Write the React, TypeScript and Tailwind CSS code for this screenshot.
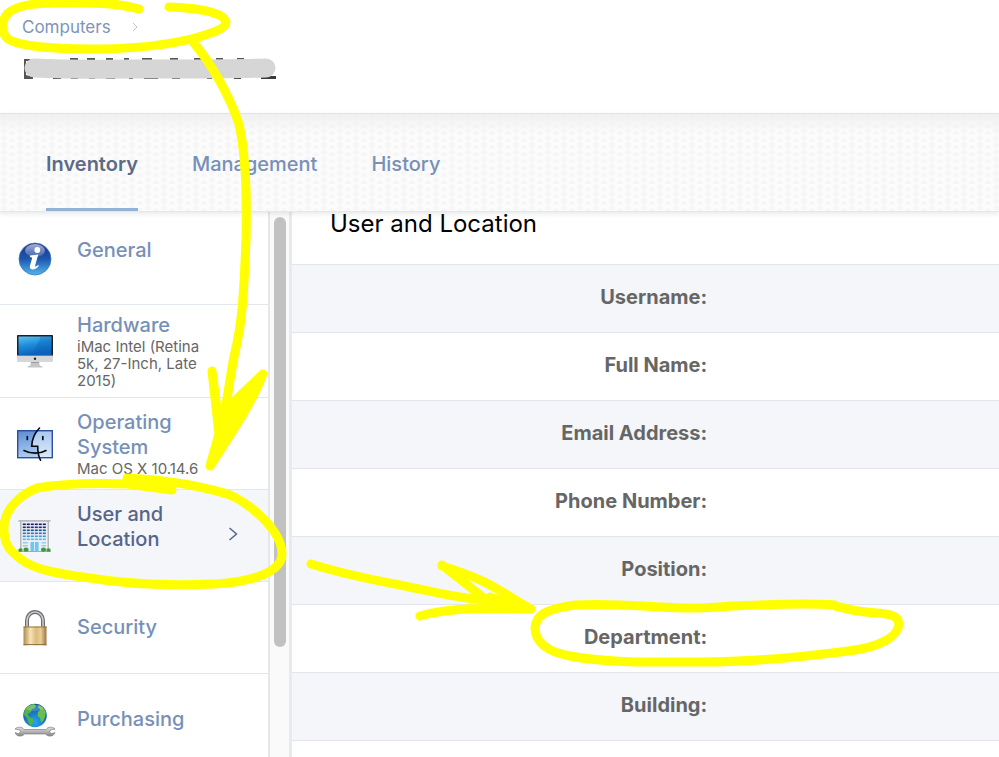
import type { ReactNode } from 'react';

function InfoIcon() {
  return (
    <svg viewBox="0 0 34 34" className="size-[34px]" aria-hidden="true">
      <defs>
        <linearGradient id="info-body" x1="0" y1="0" x2="0" y2="1">
          <stop offset="0" stopColor="#1d2f8c" />
          <stop offset="0.5" stopColor="#1c58ad" />
          <stop offset="1" stopColor="#55b4ec" />
        </linearGradient>
        <linearGradient id="info-gloss" x1="0" y1="0" x2="0" y2="1">
          <stop offset="0" stopColor="#fff" stopOpacity="0.6" />
          <stop offset="1" stopColor="#fff" stopOpacity="0.15" />
        </linearGradient>
      </defs>
      <circle cx="17" cy="17" r="16" fill="url(#info-body)" stroke="#3b78bd" strokeWidth="0.8" />
      <ellipse cx="17" cy="8.5" rx="10" ry="6.5" fill="url(#info-gloss)" />
      <circle cx="19.3" cy="8" r="2.9" fill="#fff" />
      <path d="M12 13.400l8.300-.8-3.200 10.900c-.3 1.300.5 1.400 1.600.6l1.500-1.100.6.9c-1.800 2.300-4.200 3.600-6.300 3.500-2.400-.1-3.100-1.600-2.500-3.700l2-7.300c.2-.8-.5-1.200-2.100-1.300z" fill="#fff" />
    </svg>
  );
}

function MonitorIcon() {
  return (
    <svg viewBox="0 0 36 34" className="h-[34px] w-9" aria-hidden="true">
      <defs>
        <linearGradient id="screen" x1="0" y1="0" x2="0.3" y2="1">
          <stop offset="0" stopColor="#5cc4f5" />
          <stop offset="0.5" stopColor="#1e8ddb" />
          <stop offset="1" stopColor="#0b62b8" />
        </linearGradient>
      </defs>
      <rect x="0" y="1" width="36" height="22" rx="0.8" fill="#1d1f22" />
      <rect x="1.500" y="2.500" width="33" height="18.500" fill="url(#screen)" />
      <path d="M24 2.500h10.500v11L15 21z" fill="#0a5cb0" opacity="0.3" />
      <path d="M0 21.500h36V27a1 1 0 0 1-1 1H1a1 1 0 0 1-1-1z" fill="#d5d7d9" />
      <circle cx="18" cy="24.700" r="1.200" fill="#222" />
      <path d="M14 28h8l.8 3.500 2.700 1v1h-15v-1l2.700-1z" fill="#c3c6c9" />
      <path d="M14 28h8l.2 1H13.800z" fill="#9b9ea1" />
    </svg>
  );
}

function FinderIcon() {
  return (
    <svg viewBox="0 0 36 34" className="h-[34px] w-9" aria-hidden="true">
      <defs>
        <linearGradient id="face" x1="0" y1="0" x2="0.200" y2="1">
          <stop offset="0" stopColor="#5d8bd3" />
          <stop offset="1" stopColor="#aecdf3" />
        </linearGradient>
        <linearGradient id="face-right" x1="0" y1="0" x2="0" y2="1">
          <stop offset="0" stopColor="#a9c7f0" />
          <stop offset="1" stopColor="#dcebfc" />
        </linearGradient>
      </defs>
      <rect x="0.700" y="3.700" width="34.600" height="27" fill="url(#face)" />
      <path d="M20.500 3.700h14.800v27H22l-1-11.500h-6.200c.5-6 2.500-11.500 5.700-15.500z" fill="url(#face-right)" />
      <rect x="0.700" y="3.700" width="34.600" height="27" fill="none" stroke="#2a4f9d" strokeWidth="1.400" />
      <g fill="none" stroke="#07090d" strokeLinecap="round">
        <path d="M22.500 1c-5 5-7.500 11-7.800 18.200h6c0 5 .7 10 2.800 14" strokeWidth="1.600" />
        <path d="M10.300 9.500v3M25.800 9.500v3" strokeWidth="1.700" />
        <path d="M7 23.500c6.500 3.500 16 3.500 22 0" strokeWidth="1.600" />
      </g>
    </svg>
  );
}

function BuildingIcon() {
  const levels = [5, 8, 11, 14, 17, 20];
  const tones = ['#171c6b', '#1b2a7c', '#214b96', '#2b73b5', '#3c98d2', '#5db7e4'];
  const columns = [4, 8, 12, 16, 20, 24];
  return (
    <svg viewBox="0 0 33 34" className="h-[34px] w-[33px]" aria-hidden="true">
      <rect x="2" y="2" width="29" height="30" fill="#eceef3" />
      <rect x="2" y="2" width="1.500" height="30" fill="#b7b9bf" />
      <rect x="29.500" y="2" width="1.500" height="30" fill="#b7b9bf" />
      <rect x="0.500" y="1" width="32" height="1.800" fill="#b9bbc0" />
      {levels.map((y, row) =>
        columns.map((x) => <rect key={`${x}-${y}`} x={x + 0.8} y={y - 0.5} width="3" height="1.6" fill={tones[row]} />),
      )}
      <path d="M4.800 23h5v1.600h-5zM4.800 26h5v1.600h-5zM23.500 23h4.500v1.600h-4.500zM23.500 26h4.500v1.600h-4.500z" fill="#8fd0f0" />
      <rect x="12.500" y="23" width="3.600" height="9" fill="#6cc7f1" />
      <rect x="17" y="23" width="3.600" height="9" fill="#6cc7f1" />
      <path d="M0 33h33v-1H0z" fill="#a9aaa8" />
      <g fill="#3f9a35">
        <ellipse cx="2.500" cy="31" rx="2.200" ry="1.700" />
        <ellipse cx="8" cy="30.700" rx="2.600" ry="2.100" />
        <ellipse cx="25.500" cy="30.700" rx="2.600" ry="2.100" />
        <ellipse cx="30.500" cy="31" rx="2.200" ry="1.700" />
      </g>
    </svg>
  );
}

function LockIcon() {
  return (
    <svg viewBox="0 0 24 36" className="h-9 w-6" aria-hidden="true">
      <defs>
        <linearGradient id="brass" x1="0" y1="0" x2="1" y2="0">
          <stop offset="0" stopColor="#b08a4e" />
          <stop offset="0.3" stopColor="#f6e4b6" />
          <stop offset="0.55" stopColor="#dcbb7b" />
          <stop offset="0.75" stopColor="#e9cf98" />
          <stop offset="1" stopColor="#9a7540" />
        </linearGradient>
      </defs>
      <path d="M4 17v-6.500a8 8.500 0 0 1 16 0V17" fill="none" stroke="#6b6d70" strokeWidth="4" />
      <path d="M4 17v-6.500a8 8.500 0 0 1 16 0V17" fill="none" stroke="#c9cbcd" strokeWidth="1.600" />
      <rect x="0.500" y="16.500" width="23" height="19" fill="url(#brass)" />
      <path d="M.5 17h23M.5 34.500h23" stroke="#8f6e3a" strokeWidth="0.900" />
    </svg>
  );
}

function GlobeIcon() {
  return (
    <svg viewBox="0 0 42 34" className="h-[34px] w-[42px]" aria-hidden="true">
      <defs>
        <radialGradient id="ocean" cx="0.5" cy="0.8" r="0.8">
          <stop offset="0" stopColor="#23a7ee" />
          <stop offset="1" stopColor="#0d4f9e" />
        </radialGradient>
        <linearGradient id="steel" x1="0" y1="0" x2="0" y2="1">
          <stop offset="0" stopColor="#dfdfdf" />
          <stop offset="1" stopColor="#888" />
        </linearGradient>
      </defs>
      <circle cx="21" cy="12.500" r="11.800" fill="url(#ocean)" />
      <path d="M10.500 7.500c2-4 6-6.500 9.500-6.500l2 2-1.500 2.500-2.500.5-1 3-3.500 2.500 2.500 3 3.500 1.500-.5 3.500-2.500 3.500-2-3.500-1-4-3.500-3.500z" fill="#55b348" />
      <path d="M24.500 2c3 1 6 3.500 7.300 7l-.8 5-2 4-2 1.500-1-4.500-2.500-2 .5-4 2.500-2.500-2.500-2z" fill="#69be4e" />
      <path d="M12 6c4-5 13-6 18 0-5 2-12 3-18 0z" fill="#fff" opacity="0.2" />
      <path
        d="M1 26c2.500-2.500 7-2.500 9 .5h22c2-3 6.500-3 9-.5l-4.500 1-1.200 2 2.200 1.500 3.500-.8c-1.500 4-7 4.500-9.500 1.300h-21c-2.500 3.200-8 2.700-9.500-1.300l3.500.8 2.200-1.500-1.200-2z"
        fill="url(#steel)"
        stroke="#808080"
        strokeWidth="0.700"
      />
    </svg>
  );
}

type Item = { title: string; detail?: ReactNode; icon: ReactNode; selected?: boolean; spaced?: boolean };

const items: Item[] = [
  { title: 'General', icon: <InfoIcon />, spaced: true },
  { title: 'Hardware', detail: 'iMac Intel (Retina 5k, 27-Inch, Late 2015)', icon: <MonitorIcon /> },
  { title: 'Operating System', detail: 'Mac OS X 10.14.6', icon: <FinderIcon /> },
  { title: 'User and Location', icon: <BuildingIcon />, selected: true, spaced: true },
  { title: 'Security', icon: <LockIcon /> },
  { title: 'Purchasing', icon: <GlobeIcon /> },
];

const fields = ['Username:', 'Full Name:', 'Email Address:', 'Phone Number:', 'Position:', 'Department:', 'Building:'];

function SidebarItem({ title, detail, icon, selected, spaced }: Item) {
  return (
    <li className={`border-b border-[#e1e7ef] ${selected ? 'bg-[#f4f6fa]' : 'bg-white'}`}>
      <a
        href="#"
        aria-current={selected ? 'page' : undefined}
        className={`flex min-h-[91px] items-center py-2 pr-[30px] ${selected ? 'text-[#56658a]' : 'text-[#7690b8]'}`}
      >
        <span className="flex w-[69px] shrink-0 justify-center">{icon}</span>
        <span className="ml-2 w-[132px]">
          <span className="block text-[20px] leading-[25px] font-medium">{title}</span>
          {detail && <span className="block text-[15px] leading-[17px] text-[#666]">{detail}</span>}
          {spaced && <span className="block h-[17px]" />}
        </span>
        {selected && (
          <svg viewBox="0 0 10 14" className="mb-1 ml-auto h-[14px] w-[10px]" aria-hidden="true">
            <path d="M1.500 1l7 6-7 6" fill="none" stroke="#56658a" strokeWidth="1.500" />
          </svg>
        )}
      </a>
    </li>
  );
}

function Annotations() {
  return (
    <svg
      viewBox="0 0 999 757"
      className="pointer-events-none absolute top-0 left-0 z-20 h-[757px] w-[999px]"
      fill="none"
      stroke="#ffff00"
      strokeWidth="9"
      strokeLinecap="round"
      strokeLinejoin="round"
      aria-hidden="true"
    >
      <path d="M139 9C115 2 85 2 55 3C25 3 10 8 5 17C1 25 2 34 8 39C20 47 60 49 90 49C130 49 165 46 195 38C216 32 226 28 226 22C224 13 200 8 169 7" />
      <path d="M193 42C212 64 230 97 239 124C246 155 247 200 246 240C244 285 243 320 235 352C230 375 228 400 221 428" />
      <path d="M212 371L219 424L227 408L263 374C251 405 230 435 210 466L219 434Z" fill="#ffff00" />
      <path d="M127 478L155 480C190 484 212 489 230 495C250 504 282 530 282 554C282 572 252 582 215 584C165 586 125 584 90 578C60 574 35 570 22 560C8 550 4 543 4 528C4 508 22 494 37 488C65 483 100 483 127 484L172 490M127 480L165 488" />
      <path d="M311 564C340 573 368 579 400 585C430 591 455 598 485 600L531 609M442 565L489 602M442 566C492 581 503 594 531 609M420 616C450 607 490 608 531 609" />
      <path d="M490 597L516 607" />
      <path d="M835 605C790 602 740 606 700 608C660 609 620 602 575 605C546 609 535 615 535 629C536 643 548 652 570 656C605 663 655 662 700 662C750 662 810 656 848 651C882 647 898 636 899 624C898 610 876 615 852 610L835 606" />
    </svg>
  );
}

function RedactedName() {
  return (
    <svg viewBox="0 0 256 24" className="h-6 w-64" role="img" aria-label="Redacted computer name">
      <path d="M2 2h8v2H4v14l7 2v2H2zM48 1h8v2h-8zM65 1h8v2h-8zM84 1h7v2h-7zM102 1h5v2h-5zM120 1h10v2h-10zM148 1h8v2h-8zM172 1h8v2h-8zM194 1h7v2h-7zM215 1h7v2h-7z" fill="#555" />
      <path d="M31 20h8v2h-8zM49 20h7v2h-7zM67 20h6v2h-6zM84 20h9v2h-9zM107 20h4v2h-4zM122 20h14v2h-14zM150 20h8v2h-8zM185 20h5v2h-5zM212 20h7v2h-7zM239 19h15v3h-15z" fill="#3a3a3a" />
      <path d="M12 11C50 13 100 12 140 12C180 12 210 12 244 11" fill="none" stroke="#d6d6d6" strokeWidth="19" strokeLinecap="round" />
    </svg>
  );
}

export default function App() {
  return (
    <div className="relative flex h-screen flex-col overflow-hidden bg-white font-[Inter,sans-serif] text-black">
      <header className="flex h-[113px] shrink-0 flex-col gap-[18px] px-[22px] pt-[15px]">
        <nav aria-label="Breadcrumb" className="flex items-center gap-5 text-[17px] leading-6 text-[#7d94bb]">
          <a href="#">Computers</a>
          <svg viewBox="0 0 8 10" className="h-[10px] w-2" aria-hidden="true">
            <path d="M2 1l4 4-4 4" fill="none" stroke="#bcc4d1" />
          </svg>
        </nav>
        <h1>
          <RedactedName />
        </h1>
      </header>

      <nav
        aria-label="Sections"
        className="relative z-10 h-[99px] shrink-0 border-t border-b border-t-[#e3e3e3] border-b-[#e4e8ee] bg-[#fcfcfc] bg-[radial-gradient(circle_at_4px_3px,#f6f6f6_2px,transparent_4px),radial-gradient(circle_at_12px_6px,#f6f6f6_2px,transparent_4px)] bg-size-[16px_7px] shadow-[0_2px_5px_rgba(0,0,0,0.09)]"
      >
        <div className="flex h-full gap-[54px] bg-linear-to-b from-[#f0f0f0] via-transparent via-20% to-transparent px-[46px] text-[20px] font-medium text-[#7690b8]">
          <a href="#" aria-current="page" className="flex items-center border-b-[3px] border-[#93b1d6] pt-1.5 font-semibold text-[#5c6a88]">
            Inventory
          </a>
          <a href="#" className="flex items-center border-b-[3px] border-transparent pt-1.5">Management</a>
          <a href="#" className="flex items-center border-b-[3px] border-transparent pt-1.5">History</a>
        </div>
      </nav>

      <div className="flex min-h-0 flex-1">
        <aside className="flex w-[292px] shrink-0 overflow-hidden">
          <ul className="min-w-0 flex-1 pt-px">
            {items.map((item) => (
              <SidebarItem key={item.title} {...item} />
            ))}
          </ul>
          <div className="flex w-6 shrink-0 justify-center border-r-[3px] border-l-2 border-r-[#e7ebef] border-l-[#e5e7e9] bg-[#fafafa] pt-[5px]">
            <div className="h-[430px] w-3 rounded-full bg-[#c1c1c1]" />
          </div>
        </aside>

        <main className="min-w-0 flex-1 overflow-hidden">
          <h2 className="h-[52px] pl-[38px] text-[24px] leading-6">User and Location</h2>
          <table className="w-full border-collapse text-[20px] text-[#666]">
            <tbody>
              {fields.map((field) => (
                <tr key={field} className="h-[68px] border-t border-b border-[#e1e6ec] odd:bg-[#f4f6fa]">
                  <th scope="row" className="w-3/5 pr-[9px] pb-1 text-right font-bold">{field}</th>
                  <td />
                </tr>
              ))}
            </tbody>
          </table>
        </main>
      </div>
      <Annotations />
    </div>
  );
}
